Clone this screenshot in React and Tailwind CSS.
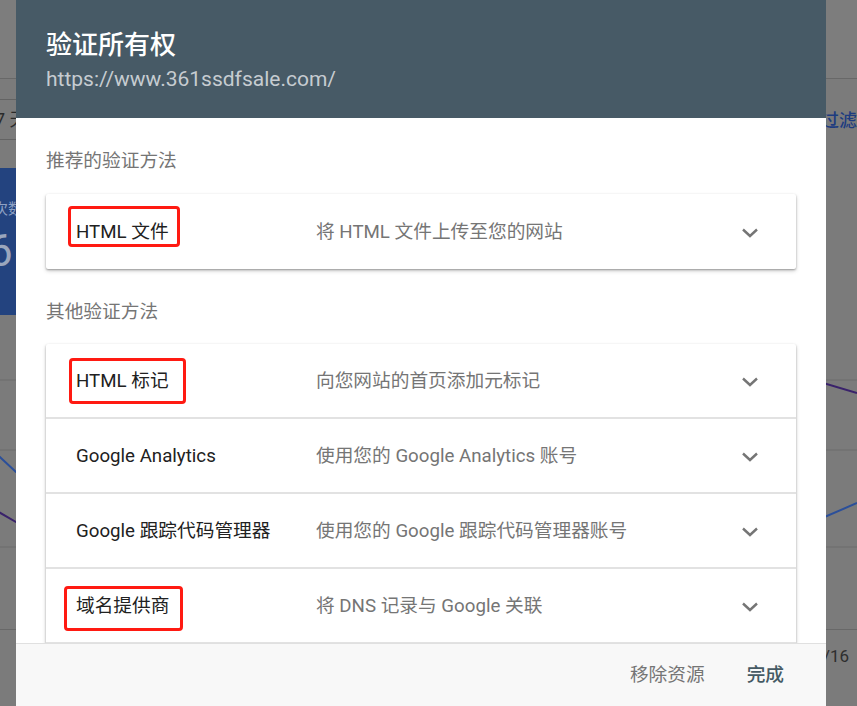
import React from "react";

const Chevron = () => (
  <svg width="18" height="10" viewBox="0 0 18 10" className="shrink-0">
    <path d="M2 1.5 L9 8 L16 1.5" fill="none" stroke="#757575" strokeWidth="2.4" />
  </svg>
);

const Mark = ({ className }) => (
  <div className={`absolute border-[3px] border-[#ff1a12] rounded-[4px] ${className}`} />
);

const Row = ({ title, desc, mark, divider }) => (
  <div
    className={`relative h-[75px] flex items-center pt-[2px] pl-[30px] pr-[37px] ${
      divider ? "border-b-2 border-[#e2e2e2]" : ""
    }`}
  >
    {mark}
    <div className="w-[240px] shrink-0 text-[18.7px] text-[#212121]">{title}</div>
    <div className="flex-1 text-[18.7px] text-[#757575]">{desc}</div>
    <Chevron />
  </div>
);

const App = () => {
  return (
    <div className="relative w-[857px] h-[706px] overflow-hidden bg-[#7b7b7b] font-[Roboto,'Noto_Sans_CJK_SC',sans-serif]">
      {/* dimmed page behind the dialog */}
      <div className="flex flex-col">
        <div className="h-[79px] border-b border-[#686868] bg-[#7d7d7d]" />
        <div className="h-[89px] flex justify-between">
          <div className="mt-[20px] h-[41px] w-[200px] border-y border-[#636363] flex items-center">
            <span className="ml-[-5px] text-[18px] text-[#2a2a2a]">7 天</span>
          </div>
          <div className="pt-[28px] text-[18px] font-medium text-[#1d3c80]">过滤</div>
        </div>
        <div className="h-[147px] flex">
          <div className="w-[220px] bg-[#23437f] pt-[30px]">
            <div className="ml-[-22px] text-[15px] text-[#8ea1c4]">击次数</div>
            <div className="ml-[-12px] mt-[6px] text-[44px] leading-[48px] text-[#9aa6bd]">6</div>
          </div>
        </div>
        <svg width="857" height="315" className="block border-b border-[#686868]">
          <line x1="0" y1="65" x2="857" y2="65" stroke="#6d6d6d" strokeWidth="1" />
          <line x1="0" y1="135" x2="857" y2="135" stroke="#6d6d6d" strokeWidth="1" />
          <line x1="0" y1="232" x2="857" y2="232" stroke="#6d6d6d" strokeWidth="1" />
          <polyline points="-10,133 16,157 820,204 857,188" fill="none" stroke="#2b4f9a" strokeWidth="2" />
          <polyline points="-10,192 16,207 820,67 857,78" fill="none" stroke="#3a226b" strokeWidth="2" />
        </svg>
        <div className="flex justify-end pt-[14px] pr-[8px]">
          <span className="text-[17px] text-[#2e2e2e]">/16</span>
        </div>
      </div>

      {/* dialog */}
      <div className="absolute left-[16px] top-0 w-[810px] h-[706px] flex flex-col bg-white">
        <div className="h-[118px] shrink-0 bg-[#475a66] px-[30px] pt-[28px]">
          <div className="text-[26px] leading-[34px] font-medium text-white">验证所有权</div>
          <div className="mt-[2px] text-[21px] leading-[30px] text-[#c6ccd1]">https://www.361ssdfsale.com/</div>
        </div>

        <div className="flex-1 overflow-hidden px-[30px] pt-[31px]">
          <div className="text-[18.7px] leading-[24px] text-[#757575]">推荐的验证方法</div>
          <div className="mt-[21px] bg-white rounded-[2px] shadow-[0_1px_2px_rgba(0,0,0,0.3),0_2px_4px_rgba(0,0,0,0.18)]">
            <Row
              title="HTML 文件"
              desc="将 HTML 文件上传至您的网站"
              mark={<Mark className="left-[22px] top-[12px] w-[112px] h-[41px]" />}
            />
          </div>

          <div className="mt-[31px] text-[18.7px] leading-[24px] text-[#757575]">其他验证方法</div>
          <div className="mt-[20px] bg-white rounded-[2px] shadow-[0_1px_2px_rgba(0,0,0,0.3),0_2px_4px_rgba(0,0,0,0.18)]">
            <Row
              title="HTML 标记"
              desc="向您网站的首页添加元标记"
              divider
              mark={<Mark className="left-[23px] top-[14px] w-[117px] h-[46px]" />}
            />
            <Row title="Google Analytics" desc="使用您的 Google Analytics 账号" divider />
            <Row title="Google 跟踪代码管理器" desc="使用您的 Google 跟踪代码管理器账号" divider />
            <Row
              title="域名提供商"
              desc="将 DNS 记录与 Google 关联"
              divider
              mark={<Mark className="left-[18px] top-[17px] w-[119px] h-[45px]" />}
            />
            <Row title="其他" desc="其他验证方法" />
          </div>
        </div>

        <div className="h-[63px] shrink-0 border-t border-[#e0e0e0] bg-[#f8f8f8] flex items-center justify-end gap-[42px] pr-[42px]">
          <span className="text-[18.7px] text-[#757575]">移除资源</span>
          <span className="text-[18.7px] font-medium text-[#455a64]">完成</span>
        </div>
      </div>
    </div>
  );
};

export default App;
